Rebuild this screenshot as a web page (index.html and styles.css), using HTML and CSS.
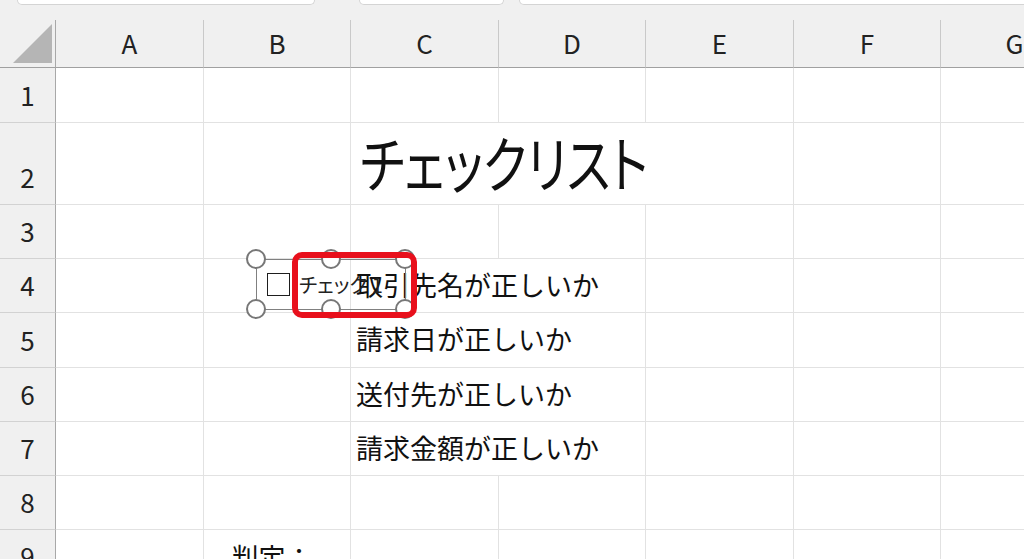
FILE: index.html
```html
<!DOCTYPE html>
<html lang="ja">
<head>
<meta charset="utf-8">
<title>チェックリスト</title>
<link rel="stylesheet" href="styles.css">
</head>
<body>
<div class="page">
  <div class="topbar">
    <div class="tb tb1"></div>
    <div class="tb tb2"></div>
    <div class="tb tb3"></div>
  </div>
  <div class="sheet">
    <div class="corner"><svg width="56" height="48" viewBox="0 0 56 48"><polygon points="13,43 52,43 52,4" fill="#b5b5b5"/></svg></div>
    <div class="ch">A</div><div class="ch">B</div><div class="ch">C</div><div class="ch">D</div><div class="ch">E</div><div class="ch">F</div><div class="ch">G</div>

    <div class="rh">1</div><div class="c"></div><div class="c"></div><div class="c"></div><div class="c"></div><div class="c"></div><div class="c"></div><div class="c"></div>

    <div class="rh">2</div><div class="c"></div><div class="c"></div><div class="c title span3"><span class="title-text">チェックリスト</span></div><div class="c"></div><div class="c"></div>

    <div class="rh">3</div><div class="c"></div><div class="c"></div><div class="c"></div><div class="c"></div><div class="c"></div><div class="c"></div><div class="c"></div>

    <div class="rh">4</div><div class="c"></div><div class="c"></div><div class="c item span2">取引先名が正しいか</div><div class="c"></div><div class="c"></div><div class="c"></div>

    <div class="rh">5</div><div class="c"></div><div class="c"></div><div class="c item span2">請求日が正しいか</div><div class="c"></div><div class="c"></div><div class="c"></div>

    <div class="rh">6</div><div class="c"></div><div class="c"></div><div class="c item span2">送付先が正しいか</div><div class="c"></div><div class="c"></div><div class="c"></div>

    <div class="rh">7</div><div class="c"></div><div class="c"></div><div class="c item span2">請求金額が正しいか</div><div class="c"></div><div class="c"></div><div class="c"></div>

    <div class="rh">8</div><div class="c"></div><div class="c"></div><div class="c"></div><div class="c"></div><div class="c"></div><div class="c"></div><div class="c"></div>

    <div class="rh">9</div><div class="c"></div><div class="c judge">判定：</div><div class="c"></div><div class="c"></div><div class="c"></div><div class="c"></div><div class="c"></div>
  </div>

  <div class="cbframe">
    <span class="cbbox"></span>
    <span class="cblabel">チェック 1</span>
  </div>
  <span class="handle h1"></span>
  <span class="handle h2"></span>
  <span class="handle h3"></span>
  <span class="handle h4"></span>
  <span class="handle h5"></span>
  <span class="handle h6"></span>
  <div class="redmark"></div>
</div>
</body>
</html>
```

FILE: styles.css
```css
html, body {
  margin: 0;
  padding: 0;
  background: #ffffff;
  overflow: hidden;
}

.page {
  position: relative;
  width: 1024px;
  height: 559px;
  overflow: hidden;
  font-family: "Noto Sans CJK JP", "Noto Sans", sans-serif;
  color: #111;
}

.topbar {
  display: flex;
  height: 20px;
  background: #f0f0f0;
  padding-left: 17px;
  box-sizing: border-box;
}

.tb {
  flex: none;
  height: 5px;
  background: #ffffff;
  border: 1px solid #d4d4d4;
  border-top: none;
  border-radius: 0 0 8px 8px;
  box-sizing: border-box;
}

.tb1 { width: 298px; margin-right: 44px; }
.tb2 { width: 145px; margin-right: 15px; }
.tb3 { width: 560px; }

.sheet {
  display: grid;
  grid-template-columns: 56px 148px 147px 148px 147px 148px 147px 148px;
  grid-template-rows: 48px 55px 82px 54px 54px 55px 54px 54px 54px 54px;
  width: 1089px;
}

.sheet > div {
  box-sizing: border-box;
}

.corner {
  background: #f0f0f0;
  border-right: 1px solid #a8a8a8;
  border-bottom: 1px solid #a0a0a0;
}

.corner svg {
  display: block;
}

.ch {
  background: #f0f0f0;
  border-right: 1px solid #c9c9c9;
  border-bottom: 1px solid #a0a0a0;
  display: flex;
  align-items: center;
  justify-content: center;
  font-size: 26px;
  color: #222;
  line-height: 1;
  padding-bottom: 1px;
}

.rh {
  background: #f0f0f0;
  border-right: 1px solid #a8a8a8;
  border-bottom: 1px solid #d2d2d2;
  display: flex;
  align-items: flex-end;
  justify-content: center;
  font-size: 26px;
  color: #222;
  line-height: 1;
  padding-bottom: 14px;
}

.c {
  border-right: 1px solid #e2e2e2;
  border-bottom: 1px solid #e2e2e2;
  white-space: nowrap;
}

.span2 { grid-column: span 2; }
.span3 { grid-column: span 3; }

.title {
  display: flex;
  align-items: flex-end;
  font-size: 61px;
  line-height: 1;
  font-feature-settings: "palt";
  padding-left: 9px;
  padding-bottom: 12px;
  color: #111;
}

.title-text {
  display: inline-block;
  transform: scaleX(0.8);
  transform-origin: left bottom;
}

.item {
  display: flex;
  align-items: center;
  font-size: 27px;
  line-height: 1;
  padding-left: 5px;
  padding-bottom: 3px;
  color: #111;
}

.judge {
  display: flex;
  align-items: center;
  justify-content: center;
  font-size: 27px;
  line-height: 1;
  padding-top: 0;
  padding-right: 10px;
  color: #111;
}

/* form checkbox control overlay */
.cbframe {
  position: absolute;
  left: 256px;
  top: 259px;
  width: 150px;
  height: 51px;
  box-sizing: border-box;
  border: 1.5px solid #808080;
  display: flex;
  align-items: center;
  gap: 9px;
  padding-left: 10px;
  overflow: hidden;
}

.cbbox {
  flex: none;
  width: 23px;
  height: 23px;
  box-sizing: border-box;
  border: 1.5px solid #1e1e1e;
  background: #ffffff;
}

.cblabel {
  font-size: 20px;
  line-height: 1;
  white-space: nowrap;
  font-feature-settings: "palt";
  color: #222;
}

.handle {
  position: absolute;
  width: 20px;
  height: 20px;
  box-sizing: border-box;
  border: 2.5px solid #777777;
  border-radius: 50%;
  background: #ffffff;
  margin-left: -10px;
  margin-top: -10px;
}

.h1 { left: 256px; top: 259px; }
.h2 { left: 331px; top: 259px; }
.h3 { left: 405px; top: 259px; }
.h4 { left: 256px; top: 309px; }
.h5 { left: 331px; top: 309px; }
.h6 { left: 405px; top: 309px; }

.redmark {
  position: absolute;
  left: 292px;
  top: 252px;
  width: 125px;
  height: 66px;
  box-sizing: border-box;
  border: 6px solid #e8101c;
  border-radius: 10px;
}
```
